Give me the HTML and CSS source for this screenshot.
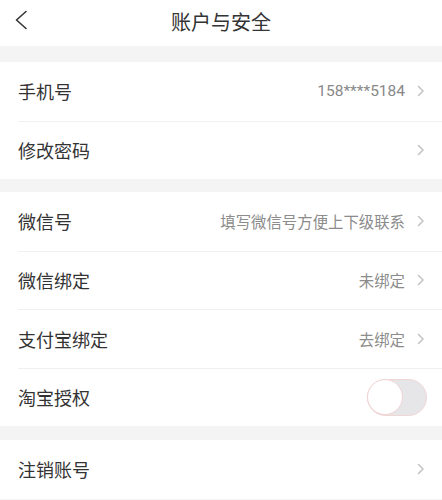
FILE: index.html
```html
<!DOCTYPE html>
<html lang="zh-CN">
<head>
<meta charset="utf-8">
<title>账户与安全</title>
<link rel="stylesheet" href="styles.css">
</head>
<body>
<div class="page">
  <header class="topbar">
    <span class="back">
      <svg width="14" height="20" viewBox="0 0 14 20"><path d="M12 1.5 L2.5 10 L12 18.5" fill="none" stroke="#333" stroke-width="1.6" stroke-linecap="round" stroke-linejoin="round"/></svg>
    </span>
    <h1 class="title">账户与安全</h1>
  </header>

  <div class="gap gap-first"></div>
  <section class="group">
    <div class="row"><span class="label">手机号</span><span class="value num">158****5184</span><svg class="chev" width="8" height="12" viewBox="0 0 8 12"><path d="M1.5 1.5 L6 6 L1.5 10.5" fill="none" stroke="#c4c4c4" stroke-width="1.6" stroke-linecap="round" stroke-linejoin="round"/></svg></div>
    <div class="row"><span class="label">修改密码</span><span class="value"></span><svg class="chev" width="8" height="12" viewBox="0 0 8 12"><path d="M1.5 1.5 L6 6 L1.5 10.5" fill="none" stroke="#c4c4c4" stroke-width="1.6" stroke-linecap="round" stroke-linejoin="round"/></svg></div>
  </section>

  <div class="gap"></div>
  <section class="group">
    <div class="row"><span class="label">微信号</span><span class="value">填写微信号方便上下级联系</span><svg class="chev" width="8" height="12" viewBox="0 0 8 12"><path d="M1.5 1.5 L6 6 L1.5 10.5" fill="none" stroke="#c4c4c4" stroke-width="1.6" stroke-linecap="round" stroke-linejoin="round"/></svg></div>
    <div class="row"><span class="label">微信绑定</span><span class="value">未绑定</span><svg class="chev" width="8" height="12" viewBox="0 0 8 12"><path d="M1.5 1.5 L6 6 L1.5 10.5" fill="none" stroke="#c4c4c4" stroke-width="1.6" stroke-linecap="round" stroke-linejoin="round"/></svg></div>
    <div class="row"><span class="label">支付宝绑定</span><span class="value">去绑定</span><svg class="chev" width="8" height="12" viewBox="0 0 8 12"><path d="M1.5 1.5 L6 6 L1.5 10.5" fill="none" stroke="#c4c4c4" stroke-width="1.6" stroke-linecap="round" stroke-linejoin="round"/></svg></div>
    <div class="row"><span class="label">淘宝授权</span><span class="value"></span><span class="switch"><span class="knob"></span></span></div>
  </section>

  <div class="gap gap-last"></div>
  <section class="group">
    <div class="row"><span class="label">注销账号</span><span class="value"></span><svg class="chev" width="8" height="12" viewBox="0 0 8 12"><path d="M1.5 1.5 L6 6 L1.5 10.5" fill="none" stroke="#c4c4c4" stroke-width="1.6" stroke-linecap="round" stroke-linejoin="round"/></svg></div>
  </section>
  <div class="gap"></div>
</div>
</body>
</html>
```

FILE: styles.css
```css
* { box-sizing: border-box; }
html, body {
  margin: 0;
  padding: 0;
  background: #f4f4f4;
  font-family: "Roboto", "Noto Sans CJK SC", sans-serif;
}
.page {
  width: 442px;
  background: #f4f4f4;
}
.topbar {
  height: 46px;
  background: #fff;
  display: flex;
  align-items: center;
  justify-content: center;
  position: relative;
}
.back {
  position: absolute;
  left: 14px;
  top: 10px;
  display: flex;
}
.title {
  margin: 0;
  font-size: 20px;
  font-weight: 400;
  color: #333;
  font-family: "Noto Sans CJK SC", sans-serif;
  margin-top: -4px;
}
.gap { height: 13px; }
.gap-first { height: 16px; }
.gap-last { height: 14px; }
.group {
  background: #fff;
}
.row {
  height: 58.5px;
  margin-left: 18px;
  padding-right: 17px;
  display: flex;
  align-items: center;
  border-top: 1px solid #f0f0f0;
}
.row:first-child {
  border-top: none;
}
.label {
  font-family: "Noto Sans CJK SC", sans-serif;
  font-size: 18px;
  color: #333;
  flex: 1;
}
.value {
  font-family: "Noto Sans CJK SC", sans-serif;
  font-size: 15.4px;
  color: #8c8c8c;
  margin-right: 12px;
}
.value.num {
  font-family: "Roboto", sans-serif;
  font-size: 15.5px;
  color: #888;
}
.chev { display: block; }
.switch {
  width: 60px;
  height: 37px;
  border-radius: 19px;
  background: #e6e6e8;
  border: 1px solid #f1d6d6;
  display: flex;
  align-items: center;
  margin-right: -2px;
}
.knob {
  width: 36px;
  height: 36px;
  border-radius: 50%;
  background: #fff;
  border: 1px solid #f0d3d3;
  margin-left: -1px;
}
```
